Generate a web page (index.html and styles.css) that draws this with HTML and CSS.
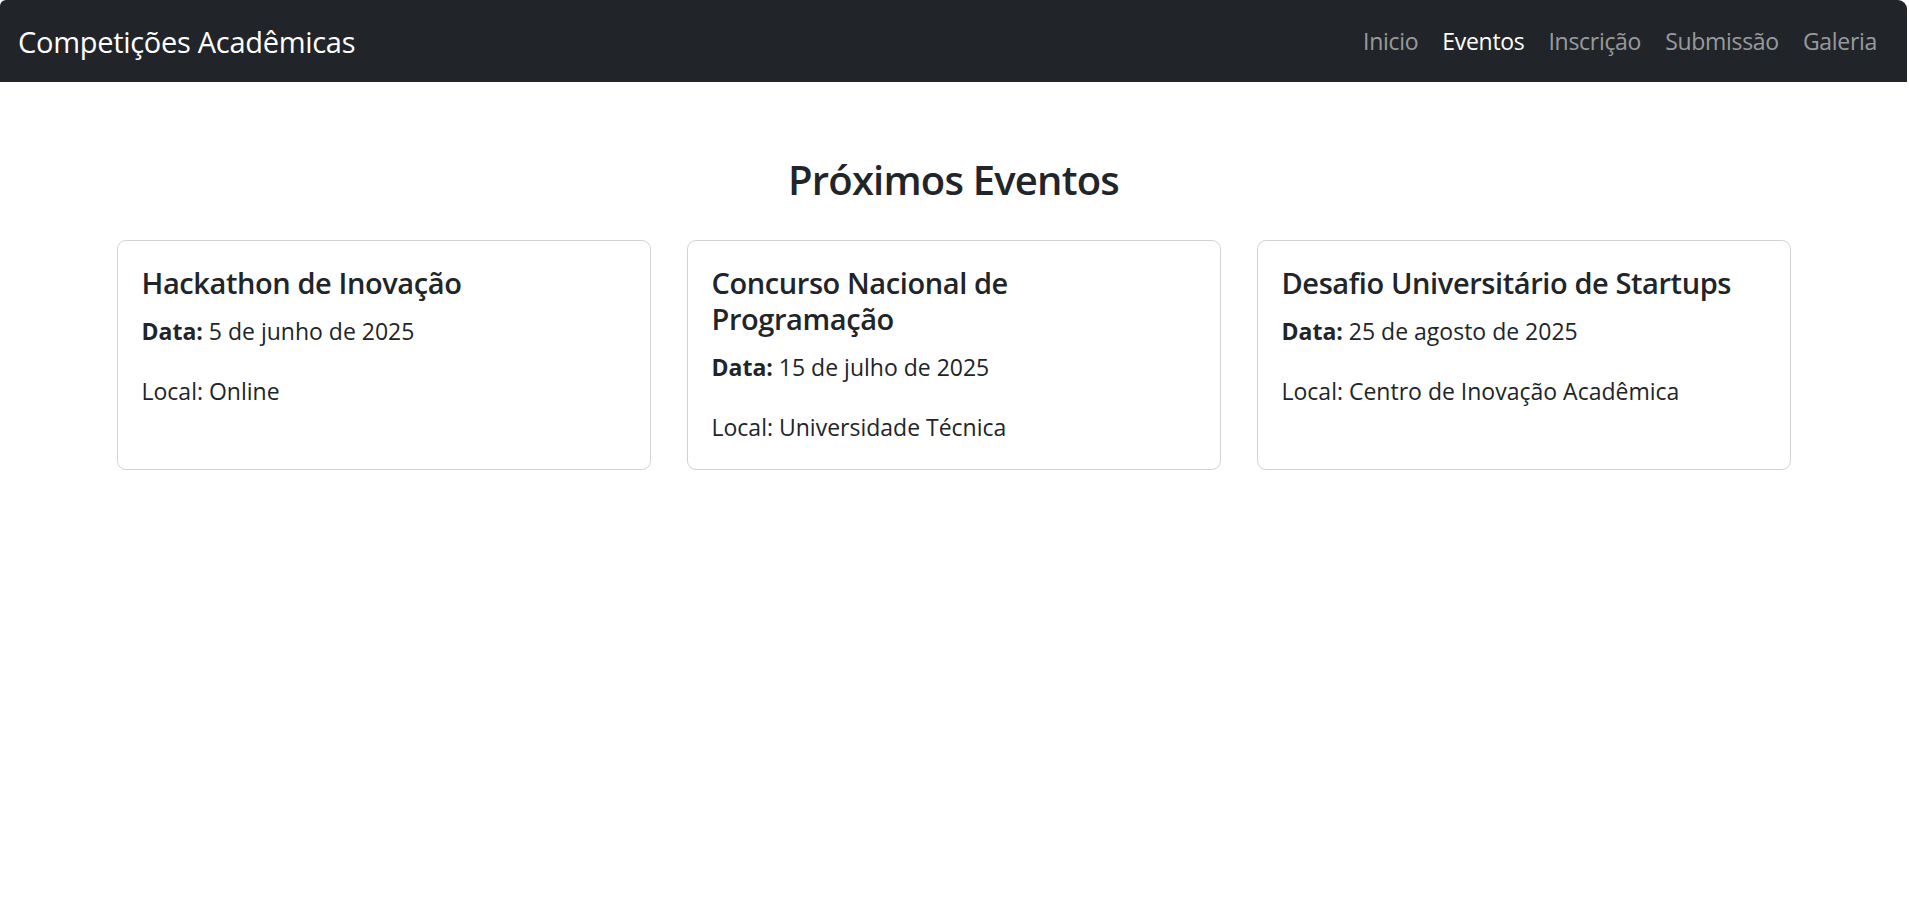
FILE: index.html
```html
<!DOCTYPE html>
<html lang="pt-BR">
<head>
<meta charset="utf-8">
<title>Competições Acadêmicas</title>
<link rel="stylesheet" href="styles.css">
</head>
<body>
<div class="window">
  <nav class="navbar">
    <a class="brand" href="#">Competições Acadêmicas</a>
    <ul class="nav">
      <li><a class="nav-link" href="#">Inicio</a></li>
      <li><a class="nav-link active" href="#">Eventos</a></li>
      <li><a class="nav-link" href="#">Inscrição</a></li>
      <li><a class="nav-link" href="#">Submissão</a></li>
      <li><a class="nav-link" href="#">Galeria</a></li>
    </ul>
  </nav>
  <main class="container">
    <h3 class="page-title">Próximos Eventos</h3>
    <div class="cards">
      <div class="card">
        <h5 class="card-title">Hackathon de Inovação</h5>
        <p class="card-text"><strong>Data:</strong> 5 de junho de 2025</p>
        <p class="card-text">Local: Online</p>
      </div>
      <div class="card">
        <h5 class="card-title">Concurso Nacional de Programação</h5>
        <p class="card-text"><strong>Data:</strong> 15 de julho de 2025</p>
        <p class="card-text">Local: Universidade Técnica</p>
      </div>
      <div class="card">
        <h5 class="card-title">Desafio Universitário de Startups</h5>
        <p class="card-text"><strong>Data:</strong> 25 de agosto de 2025</p>
        <p class="card-text">Local: Centro de Inovação Acadêmica</p>
      </div>
    </div>
  </main>
</div>
</body>
</html>
```
FILE: styles.css
```css
* { box-sizing: border-box; }
html { background: #e9e9e9; }
body {
  margin: 0;
  font-family: "Open Sans", "Noto Sans", sans-serif;
  color: #212529;
  background: #ffffff;
}
.window {
  width: 1907px;
  height: 901px;
  background: #ffffff;
  border-radius: 6px 9px 9px 0;
  overflow: hidden;
}
.navbar {
  display: flex;
  align-items: center;
  justify-content: space-between;
  background: #212529;
  padding: 11px 18px;
  height: 82px;
}
.brand {
  font-size: 29px;
  line-height: 45px;
  letter-spacing: -0.01em;
  color: #ffffff;
  text-decoration: none;
  padding: 7.5px 0;
}
.nav {
  display: flex;
  list-style: none;
  margin: 0;
  padding: 0;
}
.nav-link {
  display: block;
  font-size: 23px;
  line-height: 36px;
  letter-spacing: -0.3px;
  padding: 12px 12px;
  color: rgba(255, 255, 255, 0.55);
  text-decoration: none;
}
.nav-link.active { color: #ffffff; }
.container {
  max-width: 1710px;
  margin: 0 auto;
  padding: 0 18px;
}
.page-title {
  margin: 73px 0 35px;
  text-align: center;
  font-size: 40px;
  line-height: 50.4px;
  font-weight: 600;
  letter-spacing: -0.02em;
}
.cards {
  display: grid;
  grid-template-columns: repeat(3, 1fr);
  gap: 36px;
}
.card {
  border: 1px solid rgba(0, 0, 0, 0.175);
  border-radius: 9px;
  padding: 24px;
}
.card-title {
  margin: 0 0 12px;
  font-size: 29px;
  line-height: 36px;
  font-weight: 600;
  letter-spacing: -0.014em;
}
.card-text {
  margin: 0 0 24px;
  font-size: 23px;
  line-height: 36px;
}
.card-text:last-child { margin-bottom: 0; }
.card-text strong { font-weight: 700; }
```
